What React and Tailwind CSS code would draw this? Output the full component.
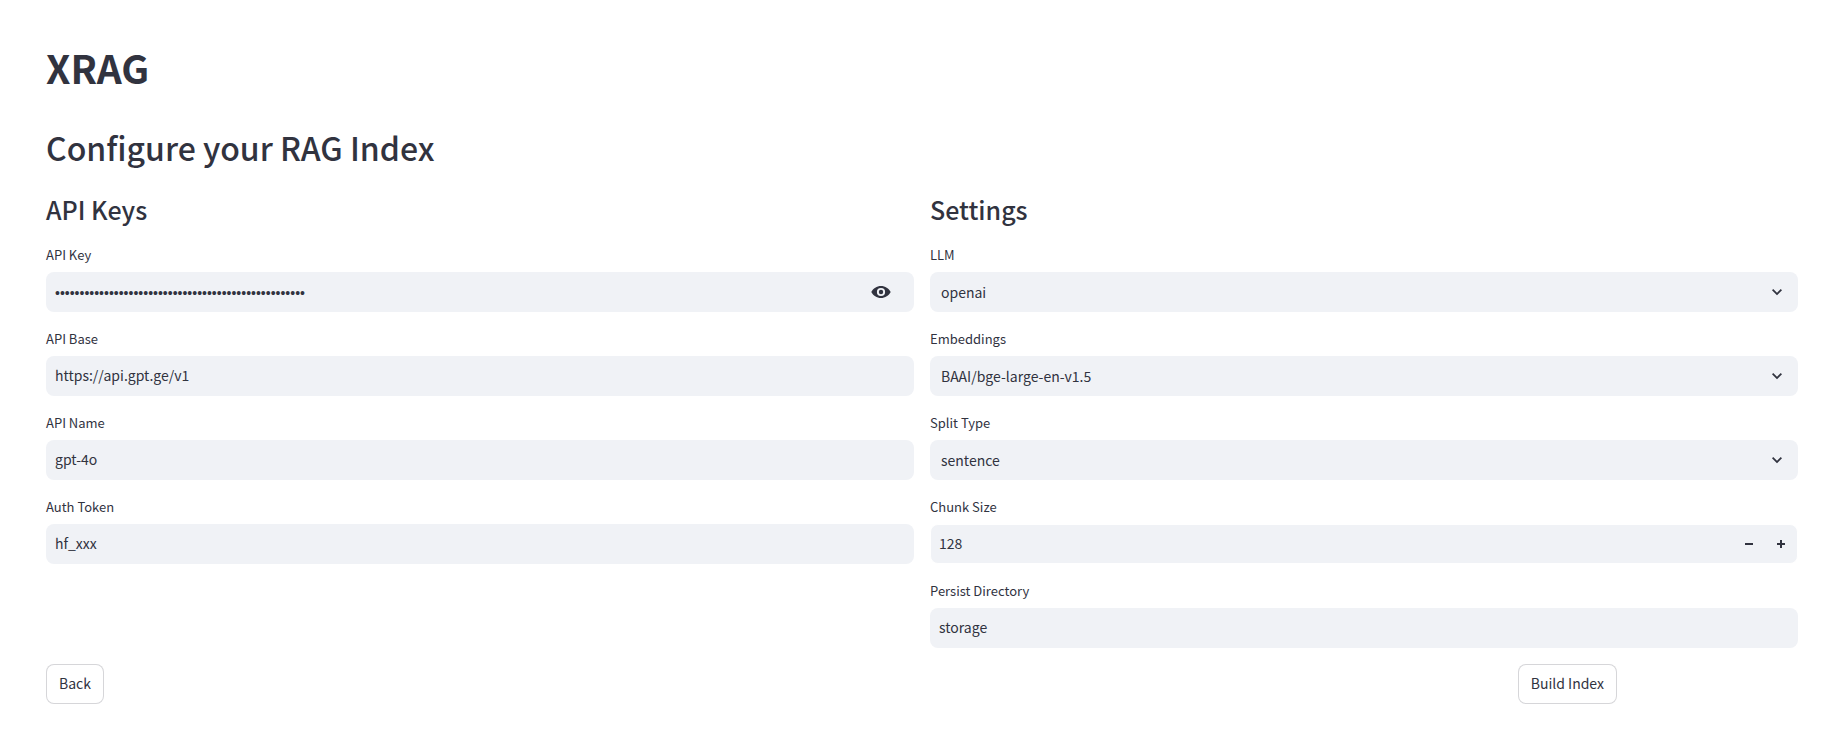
import { useState } from "react";

const inputClass =
  "h-10 w-full rounded-lg bg-[#f0f2f6] px-[9px] pb-[2px] text-[14px] leading-6 outline-none";
const buttonClass =
  "flex h-10 items-center rounded-lg border border-[#31333f]/20 bg-white px-3 pb-[2px] text-[14px] leading-6";

function Field({ id, label, children }) {
  return (
    <div className="flex flex-col gap-[6px]">
      <label htmlFor={id} className="text-[13px] leading-[22px]">
        {label}
      </label>
      {children}
    </div>
  );
}

function TextField({ id, label, initial }) {
  return (
    <Field id={id} label={label}>
      <input id={id} type="text" defaultValue={initial} className={inputClass} />
    </Field>
  );
}

function SecretField({ id, label, initial }) {
  const [visible, setVisible] = useState(false);
  return (
    <Field id={id} label={label}>
      <div className="flex h-10 items-center rounded-lg bg-[#f0f2f6] pr-[22px]">
        <input
          id={id}
          type={visible ? "text" : "password"}
          defaultValue={initial}
          className="h-10 min-w-0 flex-1 bg-transparent px-[9px] pt-[2px] font-['Liberation_Sans',sans-serif] text-[14px] leading-6 outline-none"
        />
        <button
          type="button"
          aria-label="Show password text"
          onClick={() => setVisible(!visible)}
          className="flex size-[22px] items-center justify-center"
        >
          <svg viewBox="0 0 20 20" className="size-5" fill="currentColor" aria-hidden="true">
            <path
              fillRule="evenodd"
              d="M10 4C5.8 4 2.2 6.4 0.3 10C2.2 13.6 5.8 16 10 16S17.8 13.6 19.7 10C17.8 6.4 14.2 4 10 4zM10 5.9a4.1 4.1 0 1 1 0 8.2a4.1 4.1 0 1 1 0-8.2z"
            />
            <circle cx="10" cy="10" r="2.2" />
          </svg>
        </button>
      </div>
    </Field>
  );
}

function SelectField({ id, label, options }) {
  return (
    <Field id={id} label={label}>
      <div className="grid items-center">
        <select
          id={id}
          className="col-start-1 row-start-1 h-10 w-full appearance-none rounded-lg bg-[#f0f2f6] px-[11px] text-[14px] leading-6 outline-none"
        >
          {options.map((o) => (
            <option key={o}>{o}</option>
          ))}
        </select>
        <svg
          viewBox="0 0 8 8"
          className="pointer-events-none col-start-1 row-start-1 mr-4 size-[10px] justify-self-end"
          fill="currentColor"
          aria-hidden="true"
        >
          <path d="M1 1.5l-1 1 4 4 4-4-1-1-3 3-3-3z" />
        </svg>
      </div>
    </Field>
  );
}

function NumberField({ id, label, initial }) {
  const [value, setValue] = useState(initial);
  return (
    <Field id={id} label={label}>
      <div className="flex h-10 rounded-lg border border-white bg-[#f0f2f6]">
        <input
          id={id}
          type="number"
          value={value}
          onChange={(e) => setValue(Number(e.target.value))}
          className="min-w-0 flex-1 appearance-none bg-transparent px-2 pb-[2px] text-[14px] leading-6 outline-none [-moz-appearance:textfield] [&::-webkit-inner-spin-button]:appearance-none"
        />
        <button
          type="button"
          aria-label="Decrease"
          onClick={() => setValue(value - 1)}
          className="flex w-8 items-center justify-center"
        >
          <svg viewBox="0 0 8 8" className="size-2" fill="currentColor" aria-hidden="true">
            <path d="M0 3h8v2H0z" />
          </svg>
        </button>
        <button
          type="button"
          aria-label="Increase"
          onClick={() => setValue(value + 1)}
          className="flex w-8 items-center justify-center"
        >
          <svg viewBox="0 0 8 8" className="size-2" fill="currentColor" aria-hidden="true">
            <path d="M3 0v3H0v2h3v3h2V5h3V3H5V0z" />
          </svg>
        </button>
      </div>
    </Field>
  );
}

export default function App() {
  return (
    <main className="min-h-screen bg-white pt-10 pr-[23px] pb-11 pl-[46px] font-['Noto_Sans_CJK_SC','Noto_Sans',sans-serif] text-[#31333f]">
      <h1 className="text-[39px] leading-[54px] font-bold">XRAG</h1>
      <h2 className="mt-[29px] text-[32px] leading-[48px] font-medium">
        Configure your RAG Index
      </h2>
      <div className="mt-[19px] grid grid-cols-2 gap-4">
        <section className="flex flex-col gap-4">
          <h3 className="text-[25px] leading-[38px] font-medium">API Keys</h3>
          <SecretField
            id="api-key"
            label="API Key"
            initial="sk-000000000000000000000000000000000000000000000000"
          />
          <TextField id="api-base" label="API Base" initial="https://api.gpt.ge/v1" />
          <TextField id="api-name" label="API Name" initial="gpt-4o" />
          <TextField id="auth-token" label="Auth Token" initial="hf_xxx" />
        </section>
        <section className="flex flex-col gap-4">
          <h3 className="text-[25px] leading-[38px] font-medium">Settings</h3>
          <SelectField id="llm" label="LLM" options={["openai"]} />
          <SelectField id="embeddings" label="Embeddings" options={["BAAI/bge-large-en-v1.5"]} />
          <SelectField id="split-type" label="Split Type" options={["sentence"]} />
          <NumberField id="chunk-size" label="Chunk Size" initial={128} />
          <TextField id="persist-directory" label="Persist Directory" initial="storage" />
        </section>
      </div>
      <div className="mt-4 flex justify-between">
        <button type="button" className={buttonClass}>
          Back
        </button>
        <div className="w-[16%]">
          <button type="button" className={buttonClass}>
            Build Index
          </button>
        </div>
      </div>
    </main>
  );
}
